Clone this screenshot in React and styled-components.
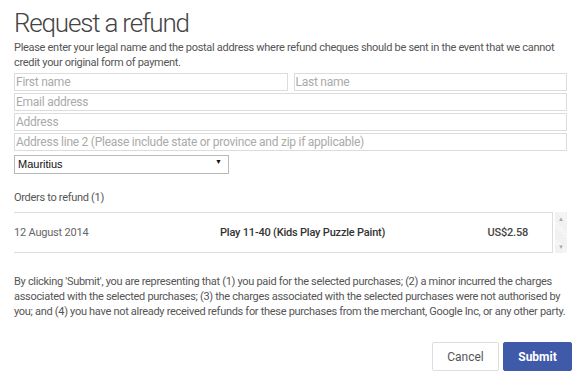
import React, { useState } from "react";
import styled, { createGlobalStyle } from "styled-components";

const GlobalStyle = createGlobalStyle`
  html, body {
    margin: 0;
    padding: 0;
    background: #ffffff;
  }
  body {
    font-family: Roboto, "Liberation Sans", Arial, sans-serif;
    color: #555555;
  }
  * {
    box-sizing: border-box;
  }
`;

const orders = [
  { date: "12 August 2014", title: "Play 11-40 (Kids Play Puzzle Paint)", price: "US$2.58" },
];

const App = () => {
  const [country, setCountry] = useState("Mauritius");

  return (
    <Page>
      <GlobalStyle />
      <Title>Request a refund</Title>
      <Intro>
        Please enter your legal name and the postal address where refund cheques should be sent in
        the event that we cannot credit your original form of payment.
      </Intro>

      <Form>
        <NameRow>
          <Field placeholder="First name" />
          <Field placeholder="Last name" />
        </NameRow>
        <Field placeholder="Email address" />
        <Field placeholder="Address" />
        <Field placeholder="Address line 2 (Please include state or province and zip if applicable)" />
        <SelectWrap>
          <Select value={country} onChange={(e) => setCountry(e.target.value)}>
            <option>Mauritius</option>
            <option>Madagascar</option>
            <option>Mauritania</option>
          </Select>
          <SelectArrow>▼</SelectArrow>
        </SelectWrap>
      </Form>

      <SectionLabel>Orders to refund ({orders.length})</SectionLabel>
      <OrdersBox>
        <OrdersTable>
          {orders.map((order) => (
            <OrderRow key={order.title}>
              <OrderDate>{order.date}</OrderDate>
              <OrderTitle>{order.title}</OrderTitle>
              <OrderPrice>{order.price}</OrderPrice>
            </OrderRow>
          ))}
        </OrdersTable>
        <Scrollbar>
          <ScrollArrow>▲</ScrollArrow>
          <ScrollArrow>▼</ScrollArrow>
        </Scrollbar>
      </OrdersBox>

      <Disclaimer>
        By clicking 'Submit', you are representing that (1) you paid for the selected purchases; (2) a
        minor incurred the charges associated with the selected purchases; (3) the charges associated
        with the selected purchases were not authorised by you; and (4) you have not already received
        refunds for these purchases from the merchant, Google Inc, or any other party.
      </Disclaimer>

      <Footer>
        <Button>Cancel</Button>
        <Button primary>Submit</Button>
      </Footer>
    </Page>
  );
};

export default App;

const Page = styled.div`
  width: 580px;
  padding: 7px 13px 0 14px;
`;

const Title = styled.h1`
  margin: 0;
  font-size: 26px;
  line-height: 32px;
  font-weight: 300;
  letter-spacing: -1.2px;
  color: #444444;
`;

const Intro = styled.p`
  margin: 1px 0 0;
  font-size: 11px;
  line-height: 15px;
  letter-spacing: -0.3px;
  color: #555555;
`;

const Form = styled.div`
  margin-top: 3px;
  display: flex;
  flex-direction: column;
  gap: 2px;
`;

const NameRow = styled.div`
  display: grid;
  grid-template-columns: 1fr 1fr;
  gap: 6px;
`;

const Field = styled.input`
  width: 100%;
  height: 18px;
  margin: 0;
  padding: 0 1px;
  border: 1px solid #dcdcdc;
  border-radius: 0;
  font-family: Roboto, "Liberation Sans", Arial, sans-serif;
  font-size: 12px;
  letter-spacing: -0.25px;
  color: #333333;
  outline: none;

  &::placeholder {
    color: #aaaaaa;
  }
`;

const SelectWrap = styled.div`
  position: relative;
  width: 215px;
  height: 19px;
`;

const Select = styled.select`
  appearance: none;
  width: 100%;
  height: 100%;
  margin: 0;
  padding: 0 0 0 3px;
  border: 1px solid #b9b9b9;
  border-radius: 0;
  background: #ffffff;
  font-family: "Liberation Sans", Arial, sans-serif;
  font-size: 11px;
  color: #111111;
  outline: none;
`;

const SelectArrow = styled.span`
  position: absolute;
  right: 7px;
  top: 4px;
  font-size: 7px;
  line-height: 10px;
  color: #111111;
  pointer-events: none;
`;

const SectionLabel = styled.div`
  margin-top: 18px;
  font-size: 11px;
  line-height: 15px;
  letter-spacing: -0.3px;
  color: #555555;
`;

const OrdersBox = styled.div`
  margin-top: 7px;
  display: flex;
  height: 41px;
`;

const OrdersTable = styled.div`
  flex: 1;
  border-top: 1px solid #dddddd;
  border-bottom: 1px solid #dddddd;
  border-right: 1px solid #dddddd;
`;

const OrderRow = styled.div`
  display: grid;
  grid-template-columns: 206px 1fr auto;
  align-items: center;
  height: 39px;
  padding-right: 24px;
  font-size: 11px;
  letter-spacing: -0.2px;
`;

const OrderDate = styled.span`
  color: #666666;
`;

const OrderTitle = styled.span`
  font-weight: 500;
  color: #333333;
`;

const OrderPrice = styled.span`
  font-weight: 500;
  color: #444444;
`;

const Scrollbar = styled.div`
  width: 12px;
  margin-left: 2px;
  display: flex;
  flex-direction: column;
  justify-content: space-between;
  align-items: center;
  padding: 3px 0 2px;
  background: repeating-linear-gradient(
    45deg,
    #eeeeee 0px,
    #eeeeee 1px,
    #f8f8f8 1px,
    #f8f8f8 2px
  );
`;

const ScrollArrow = styled.span`
  font-size: 6px;
  line-height: 8px;
  color: #a8a8a8;
`;

const Disclaimer = styled.p`
  margin: 21px 0 0;
  font-size: 11px;
  line-height: 15px;
  letter-spacing: -0.3px;
  color: #555555;
`;

const Footer = styled.div`
  display: flex;
  justify-content: flex-end;
  gap: 4px;
  margin: 23px -5px 0 0;
`;

const Button = styled.button`
  width: ${({ primary }) => (primary ? "69px" : "67px")};
  height: 29px;
  border: 1px solid ${({ primary }) => (primary ? "#3f5aa8" : "#dddddd")};
  border-radius: 2px;
  background: ${({ primary }) => (primary ? "#3f5aa8" : "#ffffff")};
  color: ${({ primary }) => (primary ? "#ffffff" : "#555555")};
  font-family: Roboto, "Liberation Sans", Arial, sans-serif;
  font-size: 12px;
  font-weight: ${({ primary }) => (primary ? 700 : 400)};
  cursor: pointer;
`;
